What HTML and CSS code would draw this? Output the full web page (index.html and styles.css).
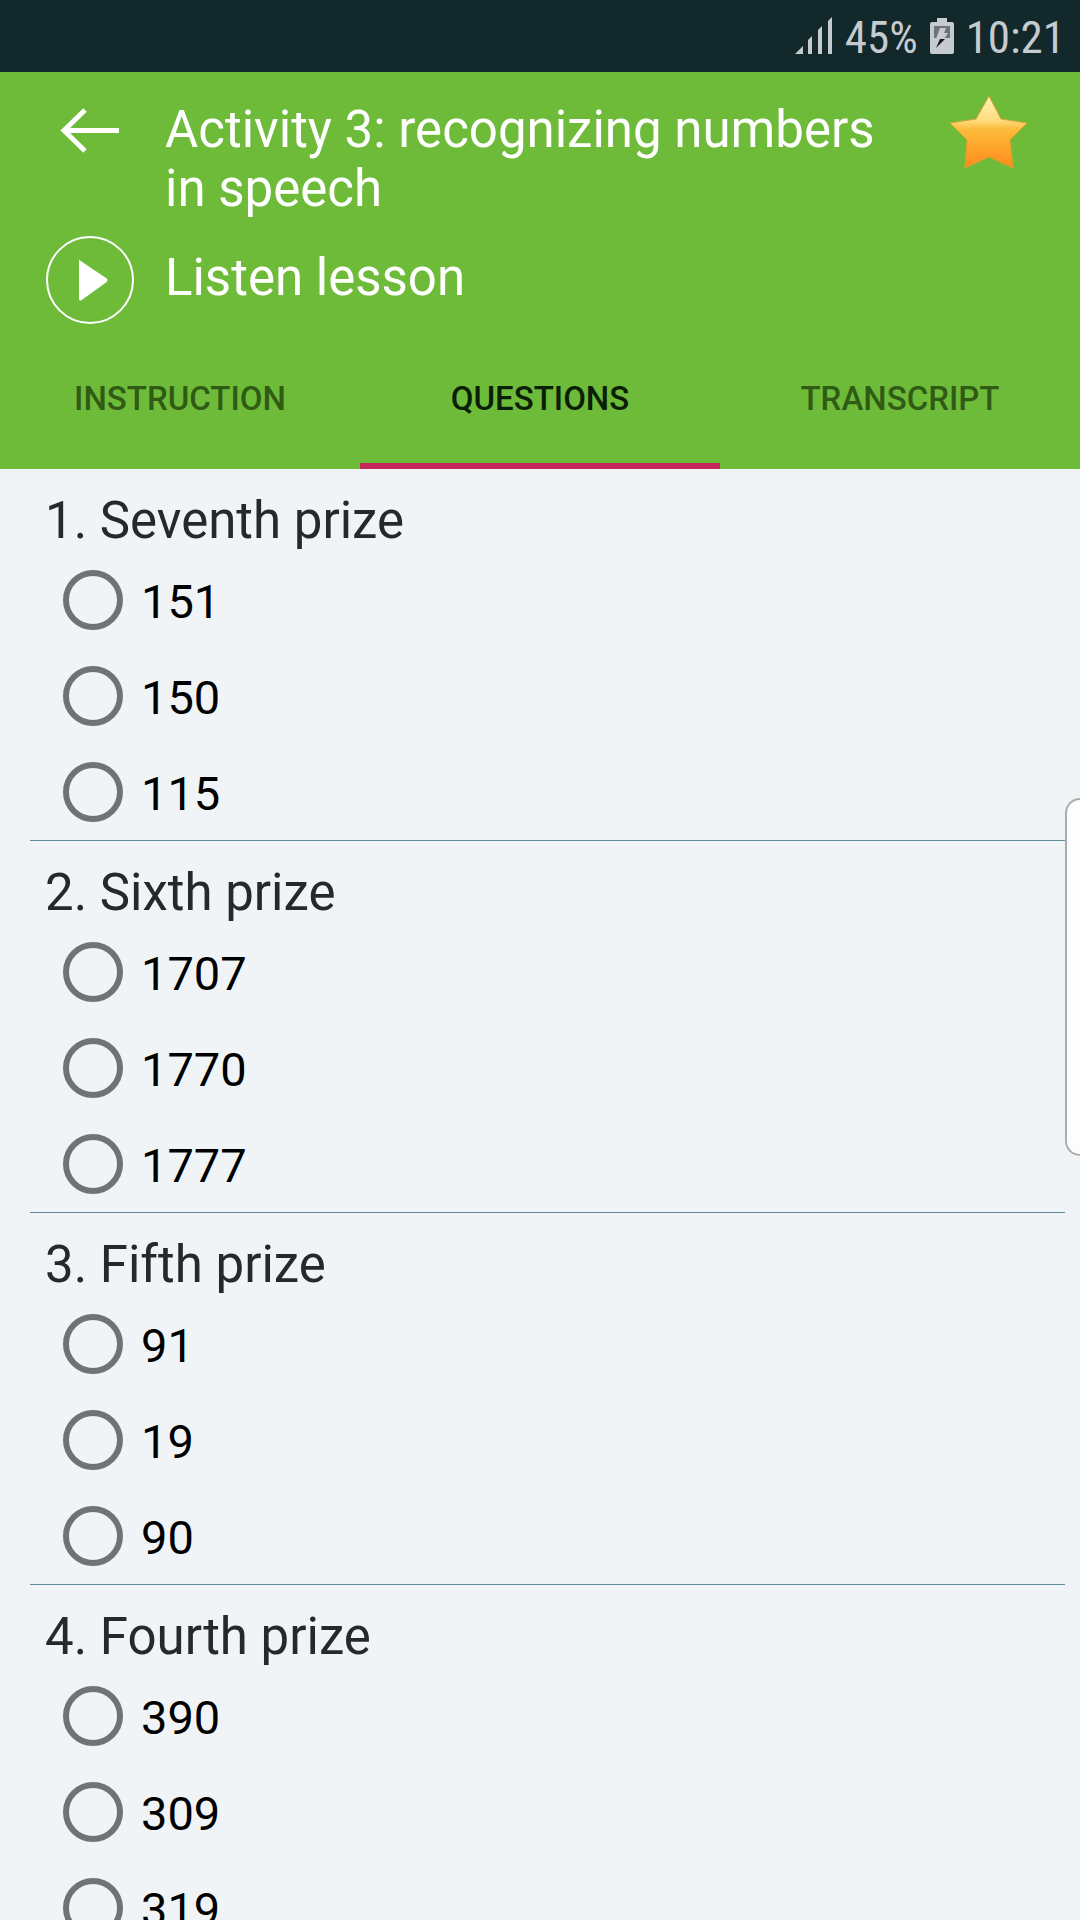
FILE: index.html
```html
<!DOCTYPE html>
<html lang="en">
<head>
<meta charset="utf-8">
<meta name="viewport" content="width=device-width, initial-scale=1">
<title>Activity 3: recognizing numbers in speech</title>
<link rel="stylesheet" href="styles.css">
</head>
<body>
<div class="status">
  <svg class="signal" viewBox="0 0 38 38" aria-hidden="true"><path d="M0 37L8 29V37zM13 37V23L17 19V37zM23 37V13L27 9V37zM33 37V4L37 0V37z"/></svg>
  <span>45%</span>
  <svg class="battery" viewBox="0 0 24 36" aria-hidden="true"><path class="cell" d="M7 0H17V4H22Q24 4 24 6V34Q24 36 22 36H2Q0 36 0 34V6Q0 4 2 4H7z"/><path class="level" d="M4 8H20V20H4z"/><path class="cell" d="M10 10H16L14 15H18L14 21H6z"/><path class="bolt" d="M6 30L10 21H15z"/></svg>
  <span>10:21</span>
</div>
<header class="header">
  <div class="bar">
    <button class="icon-button" type="button" aria-label="Back"><svg class="back" viewBox="0 0 88 76" aria-hidden="true"><path d="M73 38.500H18M39 18L18 38.500L39 59"/></svg></button>
    <h1 class="title">Activity 3: recognizing numbers in speech</h1>
    <button class="icon-button" type="button" aria-label="Favourite"><svg class="star" viewBox="0 0 80 80" aria-hidden="true">
      <defs><linearGradient id="gold" x1="0" y1="0" x2="0" y2="1"><stop offset="0" stop-color="#fff3b4"/><stop offset=".34" stop-color="#fddc80"/><stop offset=".46" stop-color="#fdbc3c"/><stop offset="1" stop-color="#fe8a1a"/></linearGradient></defs>
      <path fill="url(#gold)" stroke="#d9a12e" stroke-width="1" stroke-linejoin="round" d="M40 4L52 27L78 31L61 48L64 76L40 65L16 76L18 48L1 31L27 27z"/></svg></button>
    <button class="icon-button" type="button" aria-label="Play lesson"><svg class="play" viewBox="0 0 88 88" aria-hidden="true"><circle cx="44" cy="44" r="43"/><path d="M34 24.500L60 42Q63 44 60 46.500L35 64.500Q33 65 33 63V25Q33 23 34 24.500z"/></svg></button>
    <p class="listen">Listen lesson</p>
  </div>
  <div class="tabs" role="tablist">
    <button class="tab" type="button" role="tab" aria-selected="false">INSTRUCTION</button>
    <button class="tab active" type="button" role="tab" aria-selected="true">QUESTIONS</button>
    <button class="tab" type="button" role="tab" aria-selected="false">TRANSCRIPT</button>
  </div>
</header>
<main class="questions">
  <fieldset class="question">
    <legend class="prompt">1. Seventh prize</legend>
    <label class="option"><input type="radio" name="q1"><span>151</span></label>
    <label class="option"><input type="radio" name="q1"><span>150</span></label>
    <label class="option"><input type="radio" name="q1"><span>115</span></label>
  </fieldset>
  <fieldset class="question">
    <legend class="prompt">2. Sixth prize</legend>
    <label class="option"><input type="radio" name="q2"><span>1707</span></label>
    <label class="option"><input type="radio" name="q2"><span>1770</span></label>
    <label class="option"><input type="radio" name="q2"><span>1777</span></label>
  </fieldset>
  <fieldset class="question">
    <legend class="prompt">3. Fifth prize</legend>
    <label class="option"><input type="radio" name="q3"><span>91</span></label>
    <label class="option"><input type="radio" name="q3"><span>19</span></label>
    <label class="option"><input type="radio" name="q3"><span>90</span></label>
  </fieldset>
  <fieldset class="question">
    <legend class="prompt">4. Fourth prize</legend>
    <label class="option"><input type="radio" name="q4"><span>390</span></label>
    <label class="option"><input type="radio" name="q4"><span>309</span></label>
    <label class="option"><input type="radio" name="q4"><span>319</span></label>
  </fieldset>
</main>
<div class="edge-handle"></div>
</body>
</html>
```

FILE: styles.css
```css
* { box-sizing: border-box; }

body {
  margin: 0;
  height: 100vh;
  display: flex;
  flex-direction: column;
  position: relative;
  overflow: hidden;
  background: #f0f4f7;
  color: #000;
  font-family: Roboto, "Liberation Sans", sans-serif;
}

button {
  margin: 0;
  padding: 0;
  border: 0;
  background: none;
  font: inherit;
}

svg { display: block; }

.status {
  flex: none;
  display: flex;
  justify-content: flex-end;
  align-items: center;
  gap: 12px;
  height: 72px;
  padding-right: 15px;
  background: #12282b;
  color: #c5cbcf;
  font-family: "Roboto Condensed", Roboto, sans-serif;
  font-size: 45px;
}

.status span { padding-top: 2px; }

.signal { width: 38px; height: 38px; fill: #c5cbcf; }
.battery { width: 24px; height: 36px; }
.cell { fill: #c5cbcf; }
.level { fill: #6c7577; }
.bolt { fill: #12181a; }

.header {
  flex: none;
  background: #6ebb3a;
  color: #fff;
}

.bar {
  display: grid;
  grid-template-columns: 88px 1fr 80px;
  align-items: start;
  gap: 18px 31px;
  padding: 20px 51px 0 46px;
}

.title {
  margin: 0;
  padding-top: 8px;
  font-size: 51px;
  font-weight: 400;
  line-height: 59px;
}

.listen {
  margin: 0;
  font-size: 51px;
  line-height: 84px;
}

.back { width: 88px; height: 76px; fill: none; stroke: #fff; stroke-width: 5px; }
.star { width: 80px; height: 80px; }
.play { width: 88px; height: 88px; fill: #fff; }
.play circle { fill: none; stroke: #fff; stroke-width: 2px; }

.tabs {
  display: grid;
  grid-template-columns: repeat(3, 1fr);
}

.tab {
  padding: 55px 0 44px;
  border-bottom: 6px solid transparent;
  color: #305b15;
  font-size: 33px;
  font-weight: 500;
  line-height: 40px;
}

.tab.active {
  border-bottom-color: #c2265a;
  color: #0a1f05;
}

.questions {
  flex: 1;
  min-height: 0;
  padding: 0 15px 0 30px;
  overflow-y: auto;
  scrollbar-width: none;
}

.question {
  margin: 0;
  padding: 0 0 0 15px;
  border: 0;
  border-bottom: 1px solid #5f8c9b;
}

.prompt {
  padding: 22px 0 1px;
  color: #26282a;
  font-size: 51px;
  line-height: 60px;
}

.option {
  display: flex;
  align-items: center;
  gap: 18px;
  height: 96px;
  padding-left: 18px;
  font-size: 47px;
}

.option span { padding-top: 2px; }

.option input {
  appearance: none;
  width: 60px;
  height: 60px;
  margin: 0;
  border: 6px solid #707274;
  border-radius: 50%;
}

.option input:checked { background: radial-gradient(#707274 50%, transparent 54%); }

.edge-handle {
  position: absolute;
  top: 798px;
  right: 0;
  width: 15px;
  height: 358px;
  border: 2px solid #a9adaf;
  border-right: 0;
  border-radius: 16px 0 0 16px;
  background: #fbfdff;
}
```
